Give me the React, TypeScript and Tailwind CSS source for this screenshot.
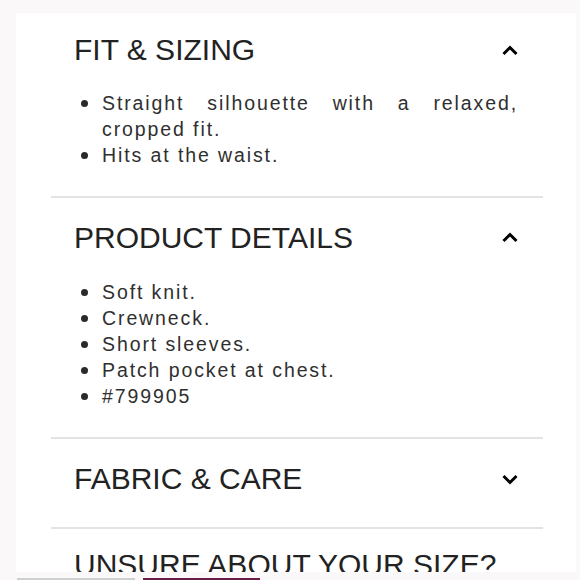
import React from "react";

const font = { fontFamily: '"Liberation Sans", Arial, Helvetica, sans-serif' };

function Chevron({ up }: { up: boolean }) {
  return (
    <svg width="16" height="11" viewBox="0 0 16 11" className="shrink-0">
      <polyline
        points={up ? "1.5,9 8,2.5 14.5,9" : "1.5,2 8,8.5 14.5,2"}
        fill="none"
        stroke="#000"
        strokeWidth="3"
        strokeLinecap="butt"
        strokeLinejoin="miter"
      />
    </svg>
  );
}

function Header({ title, up, h }: { title: string; up: boolean; h: string }) {
  return (
    <div className={`flex items-center justify-between pl-[23px] pr-[25px] ${h}`}>
      <span className="text-[30px] leading-none text-[#222]">{title}</span>
      <Chevron up={up} />
    </div>
  );
}

function Bullets({ items, mt }: { items: string[]; mt: string }) {
  return (
    <ul className={`${mt} pl-[30px] pr-[25px] text-[19.5px] leading-[26px] tracking-[1.9px] text-[#2f2f2f]`}>
      {items.map((t) => (
        <li key={t} className="flex">
          <span className="w-[21px] shrink-0 flex pt-[10px]">
            <span className="block w-[7px] h-[7px] rounded-full bg-[#2a2a2a]" />
          </span>
          <span className="flex-1 text-justify">{t}</span>
        </li>
      ))}
    </ul>
  );
}

function Divider() {
  return <div className="h-[2px] bg-[#e3e3e3]" />;
}

export default function App() {
  return (
    <div className="w-[580px] h-[580px] overflow-hidden bg-[#faf8f8] flex flex-col" style={font}>
      <div className="ml-[16px] mt-[13px] w-[560px] h-[559px] bg-white overflow-hidden">
        <div className="ml-[35px] w-[492px] flex flex-col">
          <Header title="FIT & SIZING" up h="h-[74px]" />
          <Bullets mt="mt-[3px]" items={["Straight silhouette with a relaxed, cropped fit.", "Hits at the waist."]} />
          <div className="h-[28px]" />
          <Divider />
          <Header title="PRODUCT DETAILS" up h="h-[79px]" />
          <Bullets
            mt="mt-[2px]"
            items={["Soft knit.", "Crewneck.", "Short sleeves.", "Patch pocket at chest.", "#799905"]}
          />
          <div className="h-[28px]" />
          <Divider />
          <Header title="FABRIC & CARE" up={false} h="h-[80px]" />
          <div className="h-[8px]" />
          <Divider />
          <div className="pl-[23px] pt-[21px] text-[30px] leading-none text-[#222] whitespace-nowrap">
            UNSURE ABOUT YOUR SIZE?
          </div>
        </div>
      </div>
      <div className="flex-1 flex items-end gap-[8px] pl-[17px]">
        <div className="w-[118px] h-[2px] bg-[#cfcfcf]" />
        <div className="w-[117px] h-[2px] bg-[#6b1d48]" />
      </div>
    </div>
  );
}
